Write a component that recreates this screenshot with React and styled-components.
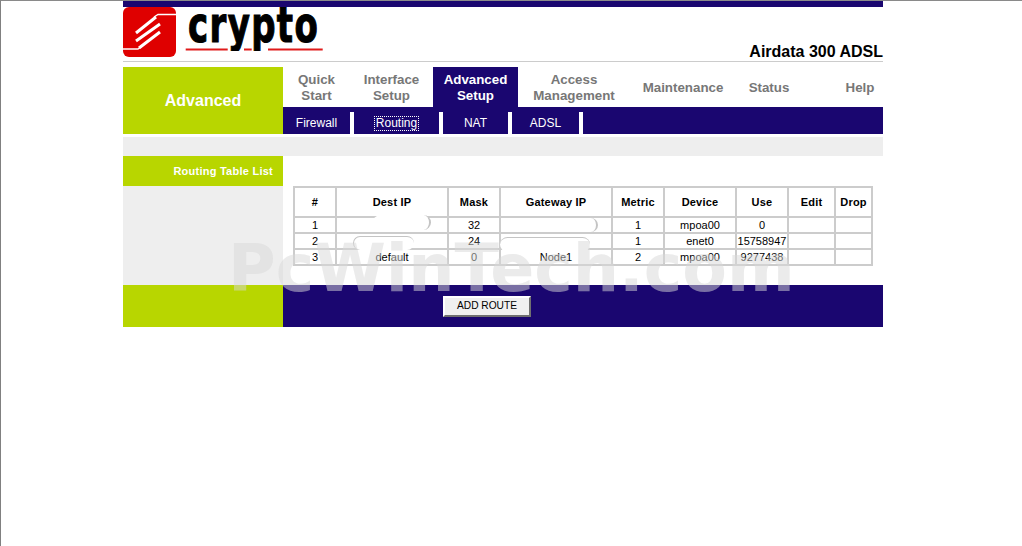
import React from "react";
import styled, { createGlobalStyle } from "styled-components";

const GlobalStyle = createGlobalStyle`
  html, body {
    margin: 0;
    padding: 0;
    background: #fff;
  }
  body {
    font-family: "Liberation Sans", Arial, sans-serif;
    min-height: 546px;
    box-sizing: border-box;
    border-top: 1px solid #8a8a8a;
    border-left: 1px solid #808080;
    overflow: hidden;
  }
`;

const NAVY = "#1a0670";
const GREEN = "#b8d600";
const PALE = "#eeeeee";

const Page = styled.div`
  position: relative;
  width: 760px;
  margin-left: 122px;
`;

const TopBar = styled.div`
  height: 6px;
  background: ${NAVY};
`;

const Header = styled.header`
  height: 54px;
  border-bottom: 1px solid #cccccc;
  display: flex;
  align-items: flex-start;
  justify-content: space-between;
`;

const Model = styled.div`
  align-self: flex-end;
  font-size: 16px;
  font-weight: bold;
  line-height: 18px;
  color: #000;
`;

const MenuRow = styled.div`
  margin-top: 5px;
  display: grid;
  grid-template-columns: 160px 600px;
  height: 67px;
`;

const Section = styled.div`
  background: ${GREEN};
  color: #fff;
  font-size: 16px;
  font-weight: bold;
  display: flex;
  align-items: center;
  justify-content: center;
`;

const MenuColumn = styled.div`
  display: flex;
  flex-direction: column;
`;

const Tabs = styled.nav`
  height: 40px;
  display: grid;
  grid-template-columns: 67px 83px 85px 112px 106px 66px 81px;
`;

const Tab = styled.div`
  display: flex;
  align-items: center;
  justify-content: center;
  text-align: center;
  font-size: 13.33px;
  font-weight: bold;
  line-height: 16px;
  padding-top: 2px;
  padding-left: ${(p) => p.$indent || 0}px;
  color: ${(p) => (p.$active ? "#fff" : "#777777")};
  background: ${(p) => (p.$active ? NAVY : "transparent")};
`;

const SubNav = styled.div`
  flex: 1;
  background: ${NAVY};
  display: flex;
  align-items: flex-end;
`;

const SubItem = styled.div`
  width: ${(p) => p.$w}px;
  height: 22px;
  box-sizing: content-box;
  border-right: 4px solid #fff;
  display: flex;
  align-items: center;
  justify-content: center;
  color: #fff;
  font-size: 12px;
`;

const Focused = styled.span`
  outline: 1px dotted #fff;
  padding: 0 1px;
  line-height: 13px;
`;

const Strip = styled.div`
  margin-top: 3px;
  height: 19px;
  background: ${PALE};
`;

const Body = styled.div`
  display: grid;
  grid-template-columns: 160px 600px;
  grid-template-rows: 129px 42px;
`;

const SideColumn = styled.div`
  background: ${PALE};
`;

const SideTitle = styled.div`
  height: 30px;
  background: ${GREEN};
  color: #fff;
  font-size: 11px;
  font-weight: bold;
  letter-spacing: 0.25px;
  display: flex;
  align-items: center;
  justify-content: flex-end;
  padding-right: 10px;
`;

const Content = styled.div`
  padding: 30px 0 0 10px;
`;

const RouteTable = styled.table`
  border-collapse: collapse;
  table-layout: fixed;
  width: 580px;
  font-size: 11px;
  color: #000;

  th, td {
    border: 2px solid #cccccc;
    padding: 0;
    text-align: center;
  }
  th {
    height: 28px;
    font-weight: bold;
    letter-spacing: 0.2px;
  }
  td {
    height: 14px;
    line-height: 14px;
  }
`;

const SideFoot = styled.div`
  background: ${GREEN};
`;

const Foot = styled.div`
  background: ${NAVY};
  padding: 10px 0 0 160px;
`;

const AddButton = styled.button`
  width: 88px;
  height: 21px;
  padding: 0 0 1px;
  box-sizing: border-box;
  background: #f0f0f0;
  border: 2px solid;
  border-color: #ffffff #707070 #707070 #ffffff;
  font-family: "Liberation Sans", Arial, sans-serif;
  font-size: 10.2px;
  color: #000;
`;

// white patches someone painted over the IP addresses
const Smudge = styled.div`
  position: absolute;
  left: ${(p) => p.$x}px;
  top: ${(p) => p.$y}px;
  width: ${(p) => p.$w}px;
  height: ${(p) => p.$h}px;
  background: #fff;
  border-radius: 8px;
  border-style: solid;
  border-color: #c4c4c4;
  border-width: ${(p) => p.$edge};
  filter: blur(0.5px);
`;

const Watermark = styled.div`
  position: absolute;
  left: 105px;
  top: 231px;
  font-family: "DejaVu Sans", sans-serif;
  font-size: 65px;
  font-weight: bold;
  line-height: 74px;
  white-space: nowrap;
  color: rgba(215, 215, 215, 0.5);
  pointer-events: none;
`;

const Logo = () => (
  <svg width="202" height="54" viewBox="0 0 202 54">
    <defs>
      <clipPath id="word">
        <rect x="60" y="0" width="142" height="44" />
      </clipPath>
    </defs>
    <rect x="0" y="0" width="53" height="50" rx="6" fill="#df0000" />
    <path d="M53 7.500 H35 L31 10" fill="none" stroke="#fff" strokeWidth="1.4" />
    <path d="M33 10 L13 26 M37 17 L13 34 M37 25 L16 41" fill="none" stroke="#fff" strokeWidth="3" />
    <path d="M0 42 H15 L19 39" fill="none" stroke="#fff" strokeWidth="1.4" />
    <g clipPath="url(#word)">
      <text
        transform="translate(65 35) scale(0.68 1)"
        fontFamily="'DejaVu Sans', sans-serif"
        fontWeight="bold"
        fontSize="50"
        letterSpacing="2"
        fill="#000"
        stroke="#000"
        strokeWidth="1.2"
      >
        crypto
      </text>
    </g>
    <path d="M62.700 42.500 H104.700 M121 42.500 H128.700 M145 42.500 H199.700" stroke="#e01a1a" strokeWidth="2" />
  </svg>
);

const columns = [
  { name: "#", w: 42 },
  { name: "Dest IP", w: 112 },
  { name: "Mask", w: 52 },
  { name: "Gateway IP", w: 112 },
  { name: "Metric", w: 52 },
  { name: "Device", w: 72 },
  { name: "Use", w: 52 },
  { name: "Edit", w: 47 },
  { name: "Drop", w: 37 },
];

const routes = [
  ["1", "", "32", "", "1", "mpoa00", "0", "", ""],
  ["2", "", "24", "", "1", "enet0", "15758947", "", ""],
  ["3", "default", "0", "Node1", "2", "mpoa00", "9277438", "", ""],
];

const tabs = [
  { label: ["Quick", "Start"] },
  { label: ["Interface", "Setup"] },
  { label: ["Advanced", "Setup"], active: true },
  { label: ["Access", "Management"] },
  { label: ["Maintenance"] },
  { label: ["Status"] },
  { label: ["Help"], indent: 35 },
];

const App = () => (
  <Page>
    <GlobalStyle />
    <TopBar />
    <Header>
      <Logo />
      <Model>Airdata 300 ADSL</Model>
    </Header>
    <MenuRow>
      <Section>Advanced</Section>
      <MenuColumn>
        <Tabs>
          {tabs.map((t) => (
            <Tab key={t.label[0]} $active={t.active} $indent={t.indent}>
              <span>
                {t.label[0]}
                {t.label[1] && <br />}
                {t.label[1]}
              </span>
            </Tab>
          ))}
        </Tabs>
        <SubNav>
          <SubItem $w={67}>Firewall</SubItem>
          <SubItem $w={85}>
            <Focused>Routing</Focused>
          </SubItem>
          <SubItem $w={65}>NAT</SubItem>
          <SubItem $w={67}>ADSL</SubItem>
        </SubNav>
      </MenuColumn>
    </MenuRow>
    <Strip />
    <Body>
      <SideColumn>
        <SideTitle>Routing Table List</SideTitle>
      </SideColumn>
      <Content>
        <RouteTable>
          <colgroup>
            {columns.map((c) => (
              <col key={c.name} style={{ width: c.w }} />
            ))}
          </colgroup>
          <thead>
            <tr>
              {columns.map((c) => (
                <th key={c.name}>{c.name}</th>
              ))}
            </tr>
          </thead>
          <tbody>
            {routes.map((r) => (
              <tr key={r[0]}>
                {r.map((v, i) => (
                  <td key={i}>{v}</td>
                ))}
              </tr>
            ))}
          </tbody>
        </RouteTable>
      </Content>
      <SideFoot />
      <Foot>
        <AddButton>ADD ROUTE</AddButton>
      </Foot>
    </Body>
    <Smudge $x={250} $y={214} $w={56} $h={15} $edge="0 2px 0 0" />
    <Smudge $x={230} $y={235} $w={60} $h={13} $edge="1px 0 0 1px" />
    <Smudge $x={379} $y={217} $w={94} $h={14} $edge="0 2px 0 0" />
    <Smudge $x={377} $y={236} $w={90} $h={14} $edge="1px 0 0 0" />
    <Watermark>PcWinTech.com</Watermark>
  </Page>
);

export default App;
